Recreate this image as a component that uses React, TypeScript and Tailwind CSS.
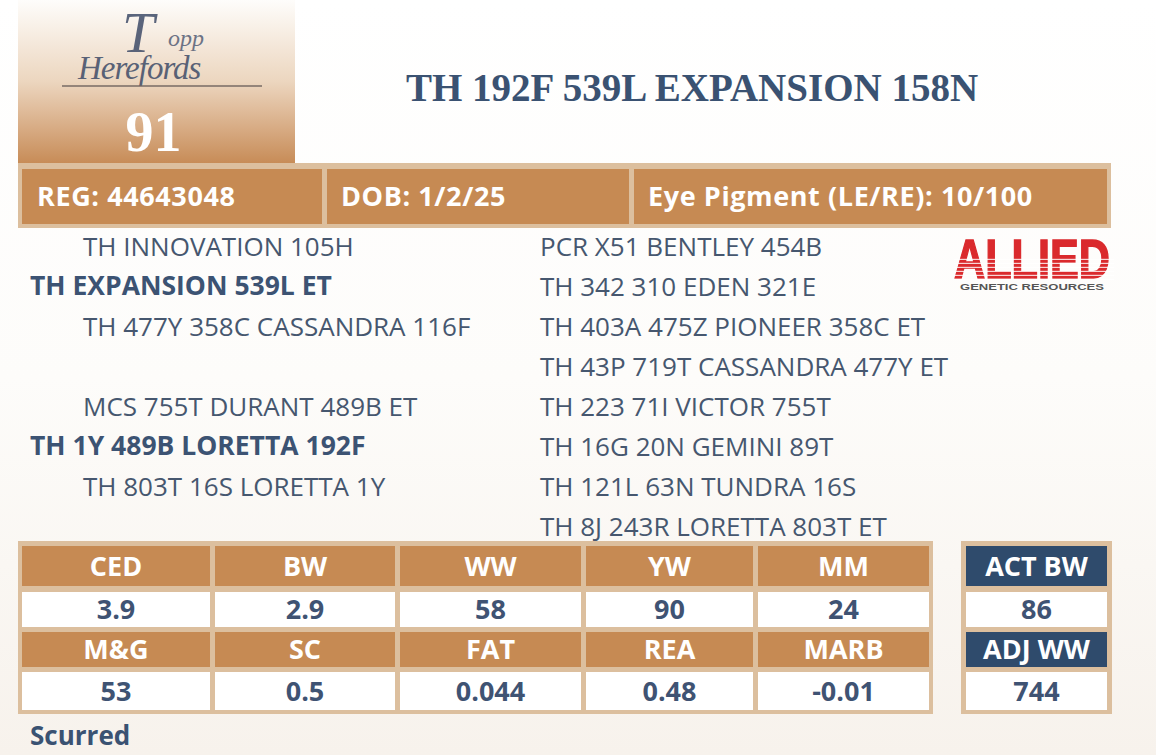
import React from "react";

const sans = "font-['Open_Sans','Noto_Sans',sans-serif]";

const leftRows: { text: string; bold?: boolean }[] = [
  { text: "TH INNOVATION 105H" },
  { text: "TH EXPANSION 539L ET", bold: true },
  { text: "TH 477Y 358C CASSANDRA 116F" },
  { text: "" },
  { text: "MCS 755T DURANT 489B ET" },
  { text: "TH 1Y 489B LORETTA 192F", bold: true },
  { text: "TH 803T 16S LORETTA 1Y" },
  { text: "" },
];

const rightRows = [
  "PCR X51 BENTLEY 454B",
  "TH 342 310 EDEN 321E",
  "TH 403A 475Z PIONEER 358C ET",
  "TH 43P 719T CASSANDRA 477Y ET",
  "TH 223 71I VICTOR 755T",
  "TH 16G 20N GEMINI 89T",
  "TH 121L 63N TUNDRA 16S",
  "TH 8J 243R LORETTA 803T ET",
];

const epdTop = [
  { label: "CED", value: "3.9", w: "w-[188px]" },
  { label: "BW", value: "2.9", w: "w-[180px]" },
  { label: "WW", value: "58", w: "w-[181px]" },
  { label: "YW", value: "90", w: "w-[167px]" },
  { label: "MM", value: "24", w: "w-[171px]" },
];

const epdBottom = [
  { label: "M&G", value: "53", w: "w-[188px]" },
  { label: "SC", value: "0.5", w: "w-[180px]" },
  { label: "FAT", value: "0.044", w: "w-[181px]" },
  { label: "REA", value: "0.48", w: "w-[167px]" },
  { label: "MARB", value: "-0.01", w: "w-[171px]" },
];

const AlliedLogo = () => (
  <svg width="160" height="58" viewBox="0 0 160 58" className="overflow-visible">
    <defs>
      <pattern id="stripes" width="4" height="4" patternUnits="userSpaceOnUse">
        <rect width="4" height="1.2" y="2.8" fill="#ffffff" opacity="0.8" />
      </pattern>
    </defs>
    <text
      x="0"
      y="42"
      textLength="156"
      lengthAdjust="spacingAndGlyphs"
      fontFamily="'Liberation Sans', Arial, sans-serif"
      fontWeight="900"
      fontSize="56"
      fill="#da2a2d"
      stroke="#da2a2d"
      strokeWidth="1.5"
    >
      ALLIED
    </text>
    <rect x="0" y="20" width="160" height="24" fill="url(#stripes)" />
    <text
      x="6"
      y="54"
      textLength="144"
      lengthAdjust="spacingAndGlyphs"
      fontFamily="'Liberation Sans', Arial, sans-serif"
      fontWeight="700"
      fontSize="8.5"
      fill="#555555"
    >
      GENETIC RESOURCES
    </text>
  </svg>
);

const ToppLogo = () => (
  <div className="relative h-[95px] w-full text-[#3f4c68]">
    <span className="absolute left-[104px] top-[4px] font-['Liberation_Serif',serif] italic text-[58px] leading-none opacity-85">
      T
    </span>
    <span className="absolute left-[150px] top-[26px] font-['Liberation_Serif',serif] italic text-[24px] leading-none opacity-75">
      opp
    </span>
    <span className="absolute left-[60px] top-[52px] font-['Liberation_Serif',serif] italic text-[33px] leading-none opacity-85 tracking-[-1px]">
      Herefords
    </span>
    <div className="absolute left-[44px] top-[85px] h-[2px] w-[200px] bg-[#6f6460] opacity-70" />
  </div>
);

const HeadCell = ({ label, w, navy }: { label: string; w: string; navy?: boolean }) => (
  <div
    className={`${w} flex items-center justify-center ${navy ? "bg-[#2f4b6c]" : "bg-[#c68a53]"} text-white font-bold text-[27px]`}
  >
    {label}
  </div>
);

const ValueCell = ({ value, w }: { value: string; w: string }) => (
  <div className={`${w} flex items-center justify-center bg-white text-[#3f5373] font-bold text-[27px]`}>
    {value}
  </div>
);

export default function App() {
  return (
    <div className={`${sans} w-[1156px] h-[755px] overflow-hidden bg-gradient-to-b from-white via-[#fdfcfa] to-[#f7f2ec]`}>
      {/* header */}
      <div className="flex h-[163px]">
        <div className="ml-[18px] w-[277px] h-[163px] flex flex-col items-center bg-gradient-to-b from-[#fefdfb] via-[#ecd6bf] to-[#c78c57]">
          <ToppLogo />
          <div className="font-['Liberation_Serif',serif] font-bold text-white text-[56px] leading-none mt-[9px] -ml-[6px]">
            91
          </div>
        </div>
        <div className="flex-1 flex items-center pl-[111px] pt-[12px]">
          <h1 className="font-['Liberation_Serif',serif] text-[#3a5272] text-[39px] leading-none font-bold">
            TH 192F 539L EXPANSION 158N
          </h1>
        </div>
      </div>

      {/* info bar */}
      <div className="ml-[18px] w-[1093px] h-[65px] bg-[#dcbf9e] p-[4px] pt-[6px] flex gap-[5px] text-white font-bold text-[27px] tracking-[0.6px]">
        <div className="w-[300px] bg-[#c68a53] flex items-center pl-[15px]">REG: 44643048</div>
        <div className="w-[302px] bg-[#c68a53] flex items-center pl-[14px]">DOB: 1/2/25</div>
        <div className="flex-1 bg-[#c68a53] flex items-center pl-[14px]">Eye Pigment (LE/RE): 10/100</div>
      </div>

      {/* pedigree */}
      <div className="flex -mt-[2px] h-[317px] text-[26px] text-[#46576f]">
        <div className="w-[540px] pl-[30px]">
          {leftRows.map((r, i) => (
            <div
              key={i}
              className={`h-[40px] flex items-center ${r.bold ? "font-bold text-[#3c5373] text-[26.5px]" : "pl-[53px]"}`}
            >
              {r.text}
            </div>
          ))}
        </div>
        <div className="flex-1 flex justify-between">
          <div>
            {rightRows.map((t, i) => (
              <div key={i} className="h-[40px] flex items-center">
                {t}
              </div>
            ))}
          </div>
          <div className="mt-[10px] mr-[42px]">
            <AlliedLogo />
          </div>
        </div>
      </div>

      {/* EPD tables */}
      <div className="flex mt-[-2px] gap-[28px]">
        <div className="ml-[18px] bg-[#dcbf9e] pt-[5px] pb-[4px] px-[4px] flex flex-col">
          <div className="flex h-[40px] gap-[5px]">
            {epdTop.map((c) => (
              <HeadCell key={c.label} label={c.label} w={c.w} />
            ))}
          </div>
          <div className="flex h-[35px] gap-[5px] mt-[6px]">
            {epdTop.map((c) => (
              <ValueCell key={c.label} value={c.value} w={c.w} />
            ))}
          </div>
          <div className="flex h-[35px] gap-[5px] mt-[5px]">
            {epdBottom.map((c) => (
              <HeadCell key={c.label} label={c.label} w={c.w} />
            ))}
          </div>
          <div className="flex h-[38px] gap-[5px] mt-[5px]">
            {epdBottom.map((c) => (
              <ValueCell key={c.label} value={c.value} w={c.w} />
            ))}
          </div>
        </div>

        <div className="bg-[#dcbf9e] pt-[5px] pb-[4px] px-[5px] flex flex-col">
          <div className="flex h-[40px]">
            <HeadCell label="ACT BW" w="w-[141px]" navy />
          </div>
          <div className="flex h-[35px] mt-[6px]">
            <ValueCell value="86" w="w-[141px]" />
          </div>
          <div className="flex h-[35px] mt-[5px]">
            <HeadCell label="ADJ WW" w="w-[141px]" navy />
          </div>
          <div className="flex h-[38px] mt-[5px]">
            <ValueCell value="744" w="w-[141px]" />
          </div>
        </div>
      </div>

      <div className="pl-[30px] pt-[2px] text-[26px] font-bold text-[#3a5272]">Scurred</div>
    </div>
  );
}
